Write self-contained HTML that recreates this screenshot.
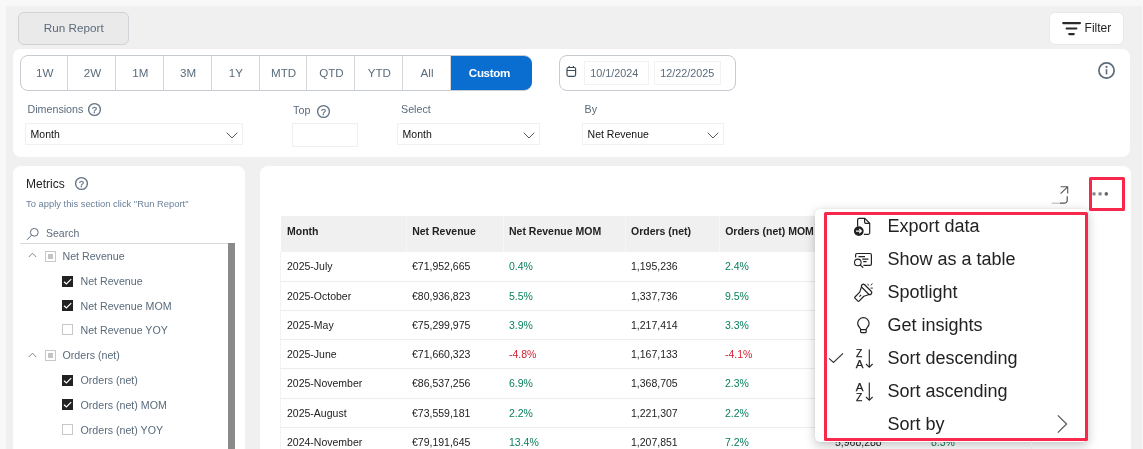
<!DOCTYPE html>
<html><head><meta charset="utf-8"><title>Report</title>
<style>
*{box-sizing:border-box;margin:0;padding:0}
html,body{width:1143px;height:449px;overflow:hidden;background:#f8f8f8;font-family:"Liberation Sans",Arial,sans-serif;color:#222}
.a{position:absolute}
#wrap{position:absolute;left:0;top:0;width:1143px;height:449px;overflow:hidden;will-change:transform}
#grey{left:6px;top:6px;width:1136px;height:450px;background:#f0f0f0}
.card{background:#fff;border-radius:8px}
.t{position:absolute;white-space:nowrap;line-height:1}
.lbl{font-size:10.7px;color:#5a6b7b}
.run{left:18px;top:12px;width:110.5px;height:33px;border:1px solid #cfd3d7;border-radius:6px;background:#eaeaea;font-size:11.7px;color:#5a6b7b;text-align:center;line-height:29.4px;text-indent:1px}
.filter{left:1049px;top:12px;width:75px;height:33px;border:1px solid #e9e9e9;border-radius:6px;background:#fff}
.grp{left:19.6px;top:55.4px;width:512.4px;height:35.6px;border:1px solid #c5cbd1;border-radius:8px;background:#fff;overflow:hidden;display:flex}
.grp div{width:47.8px;height:34px;text-indent:1.4px;border-right:1px solid #d3d7db;font-size:11.6px;color:#5a6b7b;text-align:center;line-height:33px;flex:none}
.on{left:450.8px;top:56px;width:81.2px;height:34.4px;border-radius:0 8px 8px 0;background:#0a6ed1;color:#fff;font-weight:bold;font-size:11.6px;letter-spacing:-0.35px;text-align:center;line-height:33.4px;padding-right:4px}
.date{left:559.2px;top:55.4px;width:177.2px;height:35.6px;border:1px solid #c5cbd1;border-radius:8px;background:#fff}
.din{position:absolute;top:5px;height:24px;border:1px solid #f2f2f2;font-size:10.8px;color:#5a6b7b;line-height:22px;padding-left:5px}
.sel{position:absolute;height:21.5px;border:1px solid #f1f1f1;background:#fff;font-size:10.5px;color:#111;line-height:21px;padding-left:4.6px}
.sel svg{position:absolute;right:3.4px;top:8.3px}
.row{position:absolute;left:280px;width:801px;height:29.25px;border-bottom:1px solid #ececec;border-left:1px solid #f3f3f3}
.c{position:absolute;top:0;font-size:10.5px;line-height:28.4px;white-space:nowrap;color:#222}
.g{color:#0b805e}.r{color:#d41f30}
.hd{position:absolute;left:281px;top:216px;width:800px;height:36.3px;background:#f0f0f0}
.hd .c{font-weight:bold;line-height:31px;height:36.3px;border-left:1px solid #f6f6f6;padding-left:5px}
.tr{position:absolute;font-size:10.65px;color:#5a6b7b;white-space:nowrap;line-height:12px}
.cb{position:absolute;width:11px;height:11px;background:#222}
.cb svg{display:block}
.cbe{position:absolute;width:11px;height:11px;background:#fff;border:1px solid #c8c8c8}
.mi{position:absolute;left:887.5px;font-size:18px;color:#222;white-space:nowrap;line-height:20px}
</style></head><body>
<div id="wrap">
<div id="grey" class="a"></div>

<div class="a run">Run Report</div>
<div class="a filter">
  <svg class="a" style="left:12px;top:8px" width="21" height="16" viewBox="0 0 21 16"><path d="M1.2 2.1h16.8M4.6 7.5h9.8M7.2 13.1h4.6" stroke="#2a2a2a" stroke-width="2.1" stroke-linecap="round" fill="none"/></svg>
  <div class="t" style="left:34.6px;top:9px;font-size:12px;color:#222">Filter</div>
</div>

<!-- top card -->
<div class="a card" style="left:13px;top:48.7px;width:1117px;height:108px"></div>
<div class="a grp"><div>1W</div><div>2W</div><div>1M</div><div>3M</div><div>1Y</div><div>MTD</div><div>QTD</div><div>YTD</div><div>All</div></div>
<div class="a on">Custom</div>
<div class="a date">
  <svg class="a" style="left:6px;top:9px" width="12" height="13" viewBox="0 0 12 13"><rect x="1" y="2.5" width="8.6" height="8.8" rx="1.5" fill="none" stroke="#3d4d5c" stroke-width="1.2"/><path d="M1 5.5h8.6M3.2 1v2M7.4 1v2" stroke="#3d4d5c" stroke-width="1.2"/></svg>
  <div class="din" style="left:24px;width:65px">10/1/2024</div>
  <div class="din" style="left:94px;width:67px">12/22/2025</div>
</div>
<svg class="a" style="left:1097.3px;top:60.5px" width="19" height="19" viewBox="0 0 19 19"><circle cx="9.5" cy="9.5" r="7.6" fill="none" stroke="#5a6b7b" stroke-width="1.7"/><circle cx="9.5" cy="5.9" r="1.1" fill="#5a6b7b"/><path d="M9.5 8.2v5.2" stroke="#5a6b7b" stroke-width="1.6"/></svg>

<div class="t lbl" style="left:27.5px;top:104px">Dimensions</div>
<svg class="a" style="left:87px;top:102.3px" width="15" height="15" viewBox="0 0 15 15"><circle cx="7.5" cy="7.5" r="5.9" fill="none" stroke="#617284" stroke-width="1.35"/><text x="7.5" y="10.7" font-size="9" font-family="Liberation Sans, sans-serif" fill="#617284" stroke="#617284" stroke-width="0.3" text-anchor="middle">?</text></svg>
<div class="sel" style="left:25px;top:123px;width:217.6px">Month<svg width="12" height="7" viewBox="0 0 12 7"><path d="M0.7 0.7L6 6l5.3-5.3" fill="none" stroke="#444" stroke-width="0.9"/></svg></div>

<div class="t lbl" style="left:293.1px;top:105px">Top</div>
<svg class="a" style="left:316px;top:104px" width="15" height="15" viewBox="0 0 15 15"><circle cx="7.5" cy="7.5" r="5.9" fill="none" stroke="#617284" stroke-width="1.35"/><text x="7.5" y="10.7" font-size="9" font-family="Liberation Sans, sans-serif" fill="#617284" stroke="#617284" stroke-width="0.3" text-anchor="middle">?</text></svg>
<div class="a" style="left:292px;top:123px;width:65.6px;height:23.5px;border:1px solid #efefef;background:#fff"></div>

<div class="t lbl" style="left:401px;top:104px">Select</div>
<div class="sel" style="left:397px;top:123px;width:142.6px">Month<svg width="12" height="7" viewBox="0 0 12 7"><path d="M0.7 0.7L6 6l5.3-5.3" fill="none" stroke="#444" stroke-width="0.9"/></svg></div>

<div class="t lbl" style="left:584.5px;top:104px">By</div>
<div class="sel" style="left:582px;top:123px;width:141.5px">Net Revenue<svg width="12" height="7" viewBox="0 0 12 7"><path d="M0.7 0.7L6 6l5.3-5.3" fill="none" stroke="#444" stroke-width="0.9"/></svg></div>

<!-- metrics card -->
<div class="a card" style="left:13px;top:165.5px;width:231.5px;height:300px"></div>
<div class="t" style="left:26px;top:178px;font-size:12px;color:#222">Metrics</div>
<svg class="a" style="left:73.5px;top:176px" width="15" height="15" viewBox="0 0 15 15"><circle cx="7.5" cy="7.5" r="5.9" fill="none" stroke="#617284" stroke-width="1.35"/><text x="7.5" y="10.7" font-size="9" font-family="Liberation Sans, sans-serif" fill="#617284" stroke="#617284" stroke-width="0.3" text-anchor="middle">?</text></svg>
<div class="t" style="left:26px;top:199.1px;font-size:9.4px;color:#6a8099">To apply this section click "Run Report"</div>
<svg class="a" style="left:26px;top:227px" width="14" height="14" viewBox="0 0 14 14"><circle cx="8.3" cy="5.3" r="3.9" fill="none" stroke="#5a6b7b" stroke-width="1"/><path d="M5.5 8.2L1 12.8" stroke="#5a6b7b" stroke-width="1"/></svg>
<div class="t" style="left:46px;top:228px;font-size:10.5px;color:#5a6b7b">Search</div>
<div class="a" style="left:20px;top:243px;width:208px;height:1px;background:#d9d9d9"></div>
<div class="a" style="left:228px;top:243px;width:6.5px;height:210px;background:#8a8a8a"></div>

<!-- tree -->
<svg class="a" style="left:28px;top:252px" width="9" height="6" viewBox="0 0 9 6"><path d="M0.8 5L4.5 1.2 8.2 5" fill="none" stroke="#777" stroke-width="0.9"/></svg>
<div class="cbe" style="left:44.5px;top:250.5px"><div class="a" style="left:2px;top:2px;width:5px;height:5px;background:#c4c4c4"></div></div>
<div class="tr" style="left:62.5px;top:250px">Net Revenue</div>
<div class="cb" style="left:62px;top:275.5px"><svg width="11" height="11" viewBox="0 0 11 11"><path d="M2 5.7l2.4 2.3L9.2 3.1" fill="none" stroke="#fff" stroke-width="1.2"/></svg></div>
<div class="tr" style="left:80.5px;top:275px">Net Revenue</div>
<div class="cb" style="left:62px;top:300.25px"><svg width="11" height="11" viewBox="0 0 11 11"><path d="M2 5.7l2.4 2.3L9.2 3.1" fill="none" stroke="#fff" stroke-width="1.2"/></svg></div>
<div class="tr" style="left:80.5px;top:299.75px">Net Revenue MOM</div>
<div class="cbe" style="left:62px;top:324px"></div>
<div class="tr" style="left:80.5px;top:323.6px">Net Revenue YOY</div>

<svg class="a" style="left:28px;top:351.5px" width="9" height="6" viewBox="0 0 9 6"><path d="M0.8 5L4.5 1.2 8.2 5" fill="none" stroke="#777" stroke-width="0.9"/></svg>
<div class="cbe" style="left:44.5px;top:349.75px"><div class="a" style="left:2px;top:2px;width:5px;height:5px;background:#c4c4c4"></div></div>
<div class="tr" style="left:62.5px;top:349.25px">Orders (net)</div>
<div class="cb" style="left:62px;top:374.5px"><svg width="11" height="11" viewBox="0 0 11 11"><path d="M2 5.7l2.4 2.3L9.2 3.1" fill="none" stroke="#fff" stroke-width="1.2"/></svg></div>
<div class="tr" style="left:80.5px;top:374px">Orders (net)</div>
<div class="cb" style="left:62px;top:399.25px"><svg width="11" height="11" viewBox="0 0 11 11"><path d="M2 5.7l2.4 2.3L9.2 3.1" fill="none" stroke="#fff" stroke-width="1.2"/></svg></div>
<div class="tr" style="left:80.5px;top:398.75px">Orders (net) MOM</div>
<div class="cbe" style="left:62px;top:424px"></div>
<div class="tr" style="left:80.5px;top:423.5px">Orders (net) YOY</div>

<!-- table card -->
<div class="a card" style="left:260px;top:165.5px;width:871.2px;height:300px"></div>
<div class="hd">
  <div class="c" style="left:0;width:126px;border-left:0;padding-left:6px">Month</div>
  <div class="c" style="left:125.2px;width:97.8px">Net Revenue</div>
  <div class="c" style="left:222px;width:123px">Net Revenue MOM</div>
  <div class="c" style="left:344px;width:95px">Orders (net)</div>
  <div class="c" style="left:438.2px;width:110.8px">Orders (net) MOM</div>
  <div class="c" style="left:549px;width:96px">GMV</div>
  <div class="c" style="left:645px;width:104px">GMV MOM</div>
  <div class="c" style="left:749px;width:51px">Visits</div>
</div>
<div class="row" style="top:252.3px"><div class="c" style="left:6px">2025-July</div><div class="c" style="left:131px">€71,952,665</div><div class="c g" style="left:228px">0.4%</div><div class="c" style="left:350px">1,195,236</div><div class="c g" style="left:444px">2.4%</div></div>
<div class="row" style="top:281.55px"><div class="c" style="left:6px">2025-October</div><div class="c" style="left:131px">€80,936,823</div><div class="c g" style="left:228px">5.5%</div><div class="c" style="left:350px">1,337,736</div><div class="c g" style="left:444px">9.5%</div></div>
<div class="row" style="top:310.8px"><div class="c" style="left:6px">2025-May</div><div class="c" style="left:131px">€75,299,975</div><div class="c g" style="left:228px">3.9%</div><div class="c" style="left:350px">1,217,414</div><div class="c g" style="left:444px">3.3%</div></div>
<div class="row" style="top:340.05px"><div class="c" style="left:6px">2025-June</div><div class="c" style="left:131px">€71,660,323</div><div class="c r" style="left:228px">-4.8%</div><div class="c" style="left:350px">1,167,133</div><div class="c r" style="left:444px">-4.1%</div></div>
<div class="row" style="top:369.3px"><div class="c" style="left:6px">2025-November</div><div class="c" style="left:131px">€86,537,256</div><div class="c g" style="left:228px">6.9%</div><div class="c" style="left:350px">1,368,705</div><div class="c g" style="left:444px">2.3%</div></div>
<div class="row" style="top:398.55px"><div class="c" style="left:6px">2025-August</div><div class="c" style="left:131px">€73,559,181</div><div class="c g" style="left:228px">2.2%</div><div class="c" style="left:350px">1,221,307</div><div class="c g" style="left:444px">2.2%</div></div>
<div class="row" style="top:427.8px"><div class="c" style="left:6px">2024-November</div><div class="c" style="left:131px">€79,191,645</div><div class="c g" style="left:228px">13.4%</div><div class="c" style="left:350px">1,207,851</div><div class="c g" style="left:444px">7.2%</div><div class="c" style="left:554px">5,968,288</div><div class="c g" style="left:650px">8.3%</div></div>

<!-- toolbar icons -->
<svg class="a" style="left:1048px;top:182px" width="24" height="26" viewBox="1048 182 24 26"><path d="M1060.6 186.8h7.1v6.8M1067.6 186.9l-7 6.7" fill="none" stroke="#555" stroke-width="1.1"/><path d="M1051.7 203.2h8.5" fill="none" stroke="#bbb" stroke-width="1.1"/><path d="M1060 203.2h4.2a3 3 0 0 0 3-3v-4" fill="none" stroke="#555" stroke-width="1.2"/></svg>
<div class="a" style="left:1089px;top:177px;width:36px;height:34px;border:3px solid #f8284c;border-radius:1.5px"></div>
<svg class="a" style="left:1090px;top:190px" width="20" height="8" viewBox="1090 190 20 8"><rect x="1092.4" y="192.3" width="3.2" height="3.2" rx="0.8" fill="#888"/><rect x="1098.5" y="192.3" width="3.2" height="3.2" rx="0.8" fill="#888"/><circle cx="1106.3" cy="193.9" r="1.8" fill="#666"/></svg>

<!-- popup menu -->
<div class="a" style="left:815.4px;top:208.8px;width:272.8px;height:233.4px;background:#fff;border-radius:5px;box-shadow:0 3.5px 11px rgba(0,0,0,.22),0 0 2px rgba(0,0,0,.08)"></div>
<div class="a" style="left:1031px;top:441px;width:1px;height:10px;background:#e4e4e4"></div>
<div class="a" style="left:824px;top:212px;width:264px;height:229px;border:3px solid #f8284c;border-radius:1.5px"></div>
<div class="mi" style="top:216px">Export data</div>
<div class="mi" style="top:249px">Show as a table</div>
<div class="mi" style="top:282px">Spotlight</div>
<div class="mi" style="top:315px">Get insights</div>
<div class="mi" style="top:348px">Sort descending</div>
<div class="mi" style="top:381px">Sort ascending</div>
<div class="mi" style="top:414px">Sort by</div>

<!-- menu icons -->
<svg class="a" style="left:850px;top:214px" width="26" height="26" viewBox="850 214 26 26"><path d="M857.6 226.5V220a1.6 1.6 0 0 1 1.6-1.6h5.6l4.9 4.9v9.5a1.6 1.6 0 0 1-1.6 1.6h-4.2" fill="none" stroke="#222" stroke-width="1.2"/><path d="M864.6 218.6v3.4a1.4 1.4 0 0 0 1.4 1.4h3.5" fill="none" stroke="#222" stroke-width="1.2"/><circle cx="858.8" cy="231.1" r="4.9" fill="#222"/><path d="M856 231.1h5.2M859.3 229l2.1 2.1-2.1 2.1" fill="none" stroke="#fff" stroke-width="1.1"/></svg>
<svg class="a" style="left:850px;top:247px" width="26" height="26" viewBox="850 247 26 26"><path d="M855.6 257.5v-2.6a1.4 1.4 0 0 1 1.4-1.4h13a1.4 1.4 0 0 1 1.4 1.4v9a1.4 1.4 0 0 1-1.4 1.4h-6.6" fill="none" stroke="#222" stroke-width="1.2"/><path d="M858.5 256.6h6.5M862.2 259.1h6.2M863.2 261.6h3.4" stroke="#222" stroke-width="1.1" fill="none"/><circle cx="857.8" cy="262.4" r="3.3" fill="none" stroke="#222" stroke-width="1.1"/><path d="M860.2 264.9l3 2.8" stroke="#222" stroke-width="1.2"/></svg>
<svg class="a" style="left:850px;top:280px" width="26" height="26" viewBox="850 280 26 26"><g transform="translate(863.5 292.5) rotate(45)" fill="none" stroke="#222" stroke-width="1.2" stroke-linejoin="round"><rect x="-6.5" y="-6.3" width="13" height="3.8" rx="1.9"/><path d="M-5.4 -2.5L-2.9 2.4V9.2a0.8 0.8 0 0 0 0.8 0.8h4.2a0.8 0.8 0 0 0 0.8-0.8V2.4L5.4 -2.5"/><path d="M0 3.4v2.4"/></g><path d="M867.8 283.8l0.8 1.7M872.4 283.5l-1.5 1.9M872.8 288.1h-2.3" stroke="#333" stroke-width="1" fill="none"/></svg>
<svg class="a" style="left:850px;top:313px" width="26" height="26" viewBox="850 313 26 26"><path d="M860.6 329.2c-0.3-1.6-2.9-3-2.9-5.8a5.7 5.7 0 0 1 11.4 0c0 2.8-2.6 4.2-2.9 5.8v2.6a0.9 0.9 0 0 1-0.9 0.9h-3.8a0.9 0.9 0 0 1-0.9-0.9zM860.6 329.6h5.6" fill="none" stroke="#222" stroke-width="1.2"/></svg>
<svg class="a" style="left:850px;top:345px" width="26" height="26" viewBox="850 345 26 26"><text x="859.1" y="356.6" font-size="10.3" text-anchor="middle" font-family="Liberation Sans, sans-serif" fill="#222" stroke="#222" stroke-width="0.25">Z</text><text x="859.6" y="367.5" font-size="11.6" text-anchor="middle" font-family="Liberation Sans, sans-serif" fill="#222" stroke="#222" stroke-width="0.25">A</text><path d="M869.3 349.4v17.6M866 364l3.3 3.3 3.3-3.3" fill="none" stroke="#222" stroke-width="1.1"/></svg>
<svg class="a" style="left:850px;top:378px" width="26" height="26" viewBox="850 378 26 26"><text x="859.6" y="390.7" font-size="11.6" text-anchor="middle" font-family="Liberation Sans, sans-serif" fill="#222" stroke="#222" stroke-width="0.25">A</text><text x="859.1" y="401" font-size="10.3" text-anchor="middle" font-family="Liberation Sans, sans-serif" fill="#222" stroke="#222" stroke-width="0.25">Z</text><path d="M869.3 382.4v17.6M866 397l3.3 3.3 3.3-3.3" fill="none" stroke="#222" stroke-width="1.1"/></svg>
<svg class="a" style="left:1054px;top:412px" width="16" height="24" viewBox="1054 412 16 24"><path d="M1057.8 415.4l8.8 8.6-8.8 8.6" fill="none" stroke="#555" stroke-width="1.2"/></svg>
<svg class="a" style="left:826px;top:350px" width="20" height="16" viewBox="826 350 20 16"><path d="M829 358.3l4.5 4.2 9.5-9.2" fill="none" stroke="#333" stroke-width="1.1"/></svg>
</div>
</body></html>
